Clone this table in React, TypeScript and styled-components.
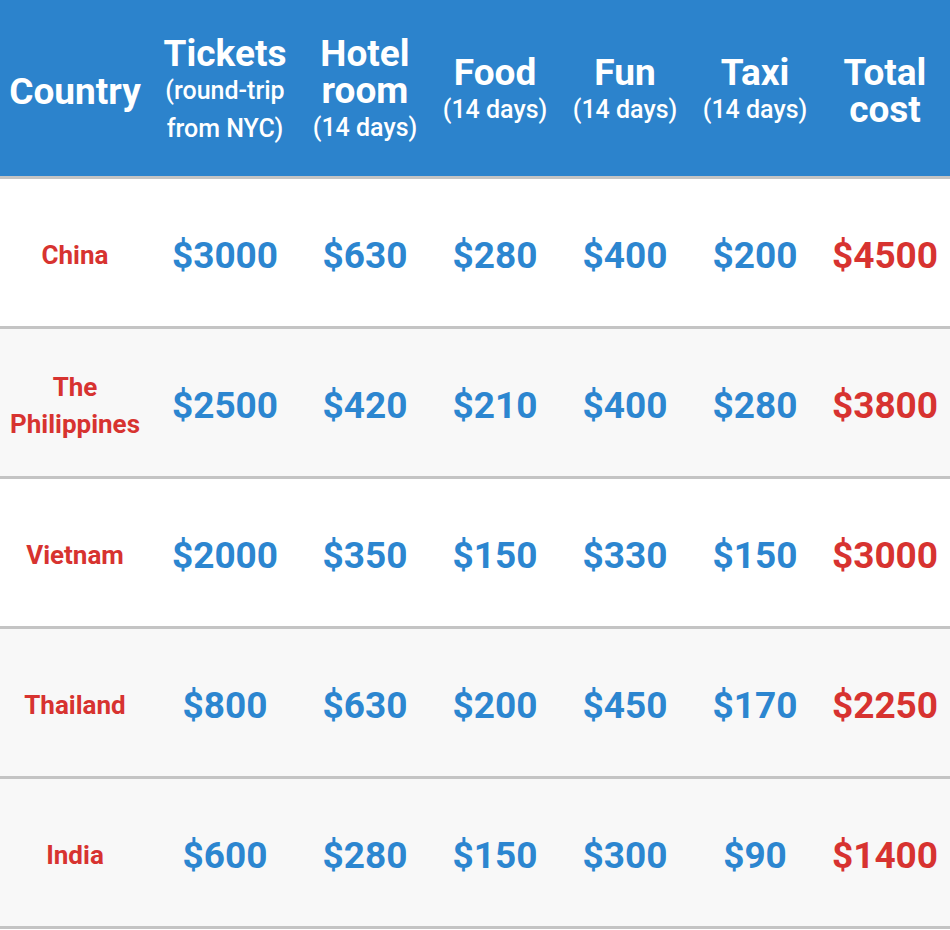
import React from "react";
import styled, { createGlobalStyle } from "styled-components";

const Global = createGlobalStyle`
  html, body { margin: 0; padding: 0; background: #ffffff; }
  body { font-family: Roboto, "Noto Sans", "Liberation Sans", sans-serif; }
  * { box-sizing: border-box; }
`;

const Table = styled.div`
  width: 950px;
  display: grid;
  grid-template-columns: 150px 150px 130px 130px 130px 130px 130px;
`;

const HeadCell = styled.div`
  height: 179px;
  padding-top: 6px;
  background: #2c83cc;
  border-bottom: 3px solid #c4c4c4;
  color: #ffffff;
  display: flex;
  flex-direction: column;
  align-items: center;
  justify-content: center;
  text-align: center;
`;

const HeadMain = styled.div`
  font-size: 37px;
  font-weight: 700;
  line-height: 37px;
`;

const HeadSub = styled.div`
  font-size: 25px;
  font-weight: 500;
  line-height: 38px;
  white-space: nowrap;
`;

const Cell = styled.div<{ $alt: boolean }>`
  height: 150px;
  padding-top: 6px;
  background: ${(p) => (p.$alt ? "#f8f8f8" : "#ffffff")};
  border-bottom: 3px solid #c4c4c4;
  display: flex;
  align-items: center;
  justify-content: center;
  text-align: center;
`;

const CountryName = styled.div`
  color: #d73330;
  font-size: 26px;
  font-weight: 700;
  line-height: 37px;
  padding: 0 2px;
`;

const Amount = styled.div<{ $total?: boolean }>`
  color: ${(p) => (p.$total ? "#d73330" : "#2c86d0")};
  font-size: 37px;
  font-weight: 700;
  line-height: 40px;
`;

const headers: { main: string[]; sub?: string[] }[] = [
  { main: ["Country"] },
  { main: ["Tickets"], sub: ["(round-trip", "from NYC)"] },
  { main: ["Hotel", "room"], sub: ["(14 days)"] },
  { main: ["Food"], sub: ["(14 days)"] },
  { main: ["Fun"], sub: ["(14 days)"] },
  { main: ["Taxi"], sub: ["(14 days)"] },
  { main: ["Total", "cost"] },
];

const rows: { country: string; vals: number[]; total: number; alt: boolean }[] = [
  { country: "China", vals: [3000, 630, 280, 400, 200], total: 4500, alt: false },
  { country: "The Philippines", vals: [2500, 420, 210, 400, 280], total: 3800, alt: true },
  { country: "Vietnam", vals: [2000, 350, 150, 330, 150], total: 3000, alt: false },
  { country: "Thailand", vals: [800, 630, 200, 450, 170], total: 2250, alt: true },
  { country: "India", vals: [600, 280, 150, 300, 90], total: 1400, alt: true },
];

export default function App() {
  return (
    <>
      <Global />
      <Table>
        {headers.map((h, i) => (
          <HeadCell key={"h" + i}>
            {h.main.map((m) => (
              <HeadMain key={m}>{m}</HeadMain>
            ))}
            {h.sub?.map((s) => (
              <HeadSub key={s}>{s}</HeadSub>
            ))}
          </HeadCell>
        ))}
        {rows.map((r) => (
          <React.Fragment key={r.country}>
            <Cell $alt={r.alt}>
              <CountryName>{r.country}</CountryName>
            </Cell>
            {r.vals.map((v, j) => (
              <Cell $alt={r.alt} key={j}>
                <Amount>${v}</Amount>
              </Cell>
            ))}
            <Cell $alt={r.alt}>
              <Amount $total>${r.total}</Amount>
            </Cell>
          </React.Fragment>
        ))}
      </Table>
    </>
  );
}
